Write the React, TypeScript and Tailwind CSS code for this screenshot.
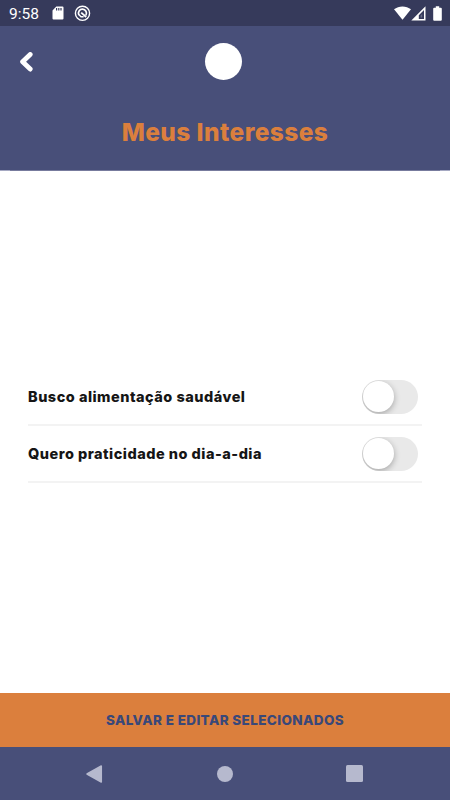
import { useState } from "react";

type Interest = { id: number; label: string };

const interests: Interest[] = [
  { id: 1, label: "Busco alimentação saudável" },
  { id: 2, label: "Quero praticidade no dia-a-dia" },
];

function StatusBar() {
  return (
    <div className="h-[26px] shrink-0 bg-[#363a5b] pl-[9px] pr-[8px] flex items-center text-white">
      <span className="font-['Roboto',sans-serif] text-[15.5px] leading-[26px] w-[43px] pt-px">9:58</span>
      <svg className="w-[12px] h-[14px]" viewBox="0 0 12 14">
        <path
          fillRule="evenodd"
          fill="#fff"
          d="M4.3.5h6.2a1 1 0 0 1 1 1v11a1 1 0 0 1-1 1h-9a1 1 0 0 1-1-1V4.6zM4 2v2.6h1.2V2zM6.2 2v2.6h1.2V2zM8.4 2v2.6h1.2V2z"
        />
      </svg>
      <svg className="ml-[10px] w-[17px] h-[17px]" viewBox="0 0 17 17" fill="none" stroke="#fff">
        <circle cx="8.5" cy="8.3" r="7.1" strokeWidth="1.4" />
        <path d="M4.9 10A4 4 0 1 1 11.9 10.2" strokeWidth="1.7" />
        <path d="M7.2 7.6l5 4.4" strokeWidth="1.8" />
        <path d="M4.8 9.6l2.2 2.2h2.6" strokeWidth="1.4" />
      </svg>
      <div className="ml-auto flex items-center">
        <svg className="w-[17px] h-[14px]" viewBox="0 0 17 14">
          <path fill="#fff" d="M0 3.3C4.7-.6 12.3-.6 17 3.3L8.5 13.7z" />
        </svg>
        <svg className="w-[15px] h-[15px]" viewBox="0 0 15 15">
          <path
            fillRule="evenodd"
            fill="#fff"
            d="M14.5.3v14.2H.3zM13 4L7.8 9.2v3.7H13z"
          />
          <path fill="#fff" d="M9.6 9.6l1.6-1.7v3.5H9.6z" opacity=".25" />
        </svg>
        <svg className="ml-[7px] w-[9px] h-[15px]" viewBox="0 0 9 15">
          <path
            fill="#fff"
            d="M2.8.3h3.4v1.5h1.6a1 1 0 0 1 1 1v10.9a1 1 0 0 1-1 1H1.2a1 1 0 0 1-1-1V2.8a1 1 0 0 1 1-1h1.6z"
          />
        </svg>
      </div>
    </div>
  );
}

function Toggle({ label }: { label: string }) {
  const [on, setOn] = useState(false);

  return (
    <button
      role="switch"
      aria-checked={on}
      aria-label={label}
      onClick={() => setOn(!on)}
      className={`w-[56px] h-[34px] rounded-full overflow-hidden px-px pb-px flex items-center ${
        on ? "bg-[#db7f3d] justify-end" : "bg-[#e9e9e9] justify-start"
      }`}
    >
      <span className="size-[31px] rounded-full bg-white shadow-[0_2px_6px_rgba(0,0,0,0.3)]" />
    </button>
  );
}

export default function App() {
  return (
    <div className="w-[450px] h-[800px] flex flex-col bg-white font-['Inter',sans-serif]">
      <StatusBar />

      <header className="h-[144px] shrink-0 bg-[#484f79] flex flex-col">
        <div className="mt-[17px] h-[37px] pl-[18px] pr-[20px] grid grid-cols-3 items-center">
          <button aria-label="Voltar" className="w-[15px]">
            <svg className="w-[15px] h-[20px]" viewBox="0 0 15 20" fill="none">
              <path
                d="M12.2 2.5L4.6 9.8l7.6 7.3"
                stroke="#fff"
                strokeWidth="4.8"
                strokeLinecap="round"
                strokeLinejoin="round"
              />
            </svg>
          </button>
          <div className="size-[37px] rounded-full bg-white justify-self-center" />
        </div>
        <h1 className="mt-[36px] text-center text-[24.5px] leading-[32px] font-extrabold tracking-[0.42px] text-[#db7f3d]">
          Meus Interesses
        </h1>
      </header>
      <div className="h-px shrink-0 px-[10px] bg-[#a5a8c2]">
        <div className="h-px bg-[#777b9d]" />
      </div>

      <main className="flex-1 flex flex-col justify-center px-[28px] pb-[12px]">
        <ul>
          {interests.map((item) => (
            <li
              key={item.id}
              className="h-[57px] flex items-center justify-between pr-[4px] border-b-2 border-[#f3f3f3]"
            >
              <span className="text-[14.5px] leading-[20px] font-extrabold tracking-[0.49px] text-[#151515]">
                {item.label}
              </span>
              <Toggle label={item.label} />
            </li>
          ))}
        </ul>
      </main>

      <button className="h-[54px] shrink-0 bg-[#db7f3d] text-[#394879] text-[13.5px] leading-[54px] font-extrabold tracking-[0.38px]">
        SALVAR E EDITAR SELECIONADOS
      </button>

      <nav className="h-[53px] shrink-0 bg-[#484f79] pl-[86px] pr-[87px] flex items-center justify-between">
        <svg className="w-[17px] h-[18px]" viewBox="0 0 17 18">
          <path
            d="M15.3 1v16L1 9z"
            fill="#b6b9ce"
            stroke="#b6b9ce"
            strokeWidth="1.5"
            strokeLinejoin="round"
          />
        </svg>
        <span className="size-[16px] rounded-full bg-[#b6b9ce]" />
        <span className="size-[17px] rounded-[1.5px] bg-[#b6b9ce]" />
      </nav>
    </div>
  );
}
